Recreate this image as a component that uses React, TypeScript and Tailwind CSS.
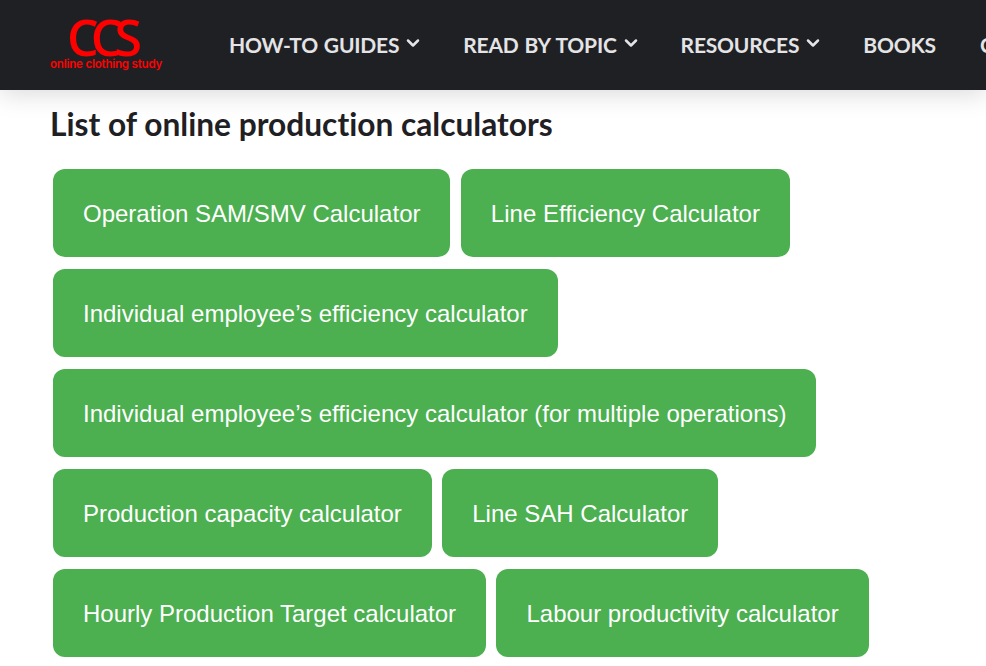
import { ChevronDown } from "lucide-react";

const navItems = [
  { label: "HOW-TO GUIDES", caret: true },
  { label: "READ BY TOPIC", caret: true },
  { label: "RESOURCES", caret: true },
  { label: "BOOKS", caret: false },
  { label: "CONTACT", caret: false },
];

const rows = [
  ["Operation SAM/SMV Calculator", "Line Efficiency Calculator"],
  ["Individual employee’s efficiency calculator"],
  ["Individual employee’s efficiency calculator (for multiple operations)"],
  ["Production capacity calculator", "Line SAH Calculator"],
  ["Hourly Production Target calculator", "Labour productivity calculator"],
];

export default function App() {
  return (
    <div className="h-[666px] w-[986px] overflow-hidden bg-white font-['Lato',sans-serif]">
      <header className="relative z-10 flex h-[90px] items-center overflow-hidden bg-[#1f2024] shadow-[0_4px_24px_rgba(0,0,0,0.15)]">
        <div className="flex w-[229px] shrink-0 flex-col items-start pl-[50px]">
          <span className="-mt-[1px] ml-[17px] font-['Open_Sans',sans-serif] text-[50px] font-semibold leading-[38px] tracking-[-8px] text-[#ff0000]">
            CCS
          </span>
          <span className="mt-[2px] whitespace-nowrap font-['Inter',sans-serif] text-[11.5px] font-semibold leading-[13px] tracking-[-0.2px] text-[#ff0000]">
            online clothing study
          </span>
        </div>
        <nav className="flex items-center gap-[44px]">
          {navItems.map((item) => (
            <a key={item.label} className="flex shrink-0 items-center gap-[4px] text-[21px] font-bold tracking-[-0.2px] [word-spacing:1px] text-[#e4e4e6]">
              {item.label}
              {item.caret && <ChevronDown size={20} strokeWidth={3} className="-mr-[4px] -mt-[5px]" />}
            </a>
          ))}
        </nav>
      </header>
      <main className="pl-[50px]">
        <h2 className="mt-[14px] text-[31.7px] font-bold leading-[40px] text-[#1f2024] [font-variant-ligatures:none]">List of online production calculators</h2>
        <div className="ml-[3px] mt-[25px] flex flex-col gap-[12px]">
          {rows.map((row) => (
            <div key={row[0]} className="flex gap-[10.4px]">
              {row.map((label) => (
                <button
                  key={label}
                  className="h-[88px] rounded-[12px] bg-[#4caf50] px-[30px] pt-[2px] font-['Liberation_Sans',sans-serif] text-[24px] text-white"
                >
                  {label}
                </button>
              ))}
            </div>
          ))}
        </div>
      </main>
    </div>
  );
}
